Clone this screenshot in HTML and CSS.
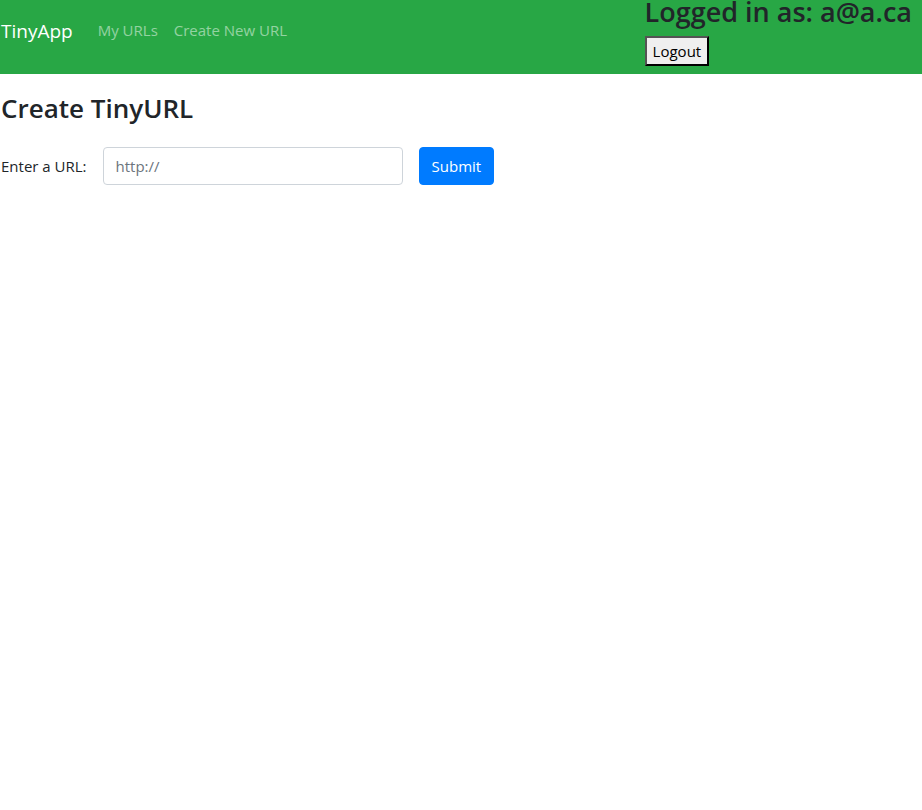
FILE: index.html
```
<!DOCTYPE html>
<html lang="en">
<head>
  <meta charset="utf-8">
  <meta name="viewport" content="width=device-width, initial-scale=1">
  <title>TinyApp</title>
  <link rel="stylesheet" href="styles.css">
</head>
<body>
  <header class="navbar">
    <nav class="nav">
      <a class="brand" href="#">TinyApp</a>
      <a class="nav-link" href="#">My URLs</a>
      <a class="nav-link" href="#">Create New URL</a>
    </nav>
    <form class="session">
      <h3 class="heading">Logged in as: a@a.ca</h3>
      <button class="logout" type="button">Logout</button>
    </form>
  </header>
  <main class="content">
    <h3 class="heading">Create TinyURL</h3>
    <form class="url-form">
      <label for="long-url">Enter a URL:</label>
      <input class="url-input" id="long-url" type="text" placeholder="http://">
      <button class="submit" type="button">Submit</button>
    </form>
  </main>
</body>
</html>
```
FILE: styles.css
```
* {
  box-sizing: border-box;
}

body {
  margin: 0;
  background: #fff;
  color: #212529;
  font: 400 15px/24px "Segoe UI", "Open Sans", "Noto Sans", sans-serif;
}

.navbar {
  display: flex;
  justify-content: space-between;
  align-items: flex-start;
  padding-right: 10px;
  padding-bottom: 8px;
  background: #28a745;
}

.nav {
  display: flex;
  align-items: flex-start;
  gap: 16px;
  padding: 16px 0 0 1px;
}

.brand,
.nav-link {
  text-decoration: none;
  line-height: 28px;
  color: rgba(255, 255, 255, 0.5);
}

.brand {
  margin-right: 9px;
  font-size: 19px;
  line-height: 30px;
  color: #fff;
}

.heading {
  margin: 0;
  font-size: 26px;
  font-weight: 600;
  line-height: 34px;
}

.session .heading {
  font-size: 27px;
  line-height: 24px;
  margin-bottom: 12px;
}

.logout {
  display: block;
  padding: 1px 6px;
  border: 2px outset #000;
  background: #efefef;
  color: #000;
  font: inherit;
}

.content {
  padding: 17px 1px;
}

.url-form {
  display: flex;
  align-items: center;
  gap: 16px;
  margin-top: 22px;
}

.url-input,
.submit {
  height: 38px;
  padding: 6px 12px;
  border: 1px solid #ced4da;
  border-radius: 4px;
  font: inherit;
}

.url-input {
  width: 300px;
}

.url-input::placeholder {
  color: #6c757d;
  opacity: 1;
}

.submit {
  border-color: #007bff;
  background: #007bff;
  color: #fff;
}
```
